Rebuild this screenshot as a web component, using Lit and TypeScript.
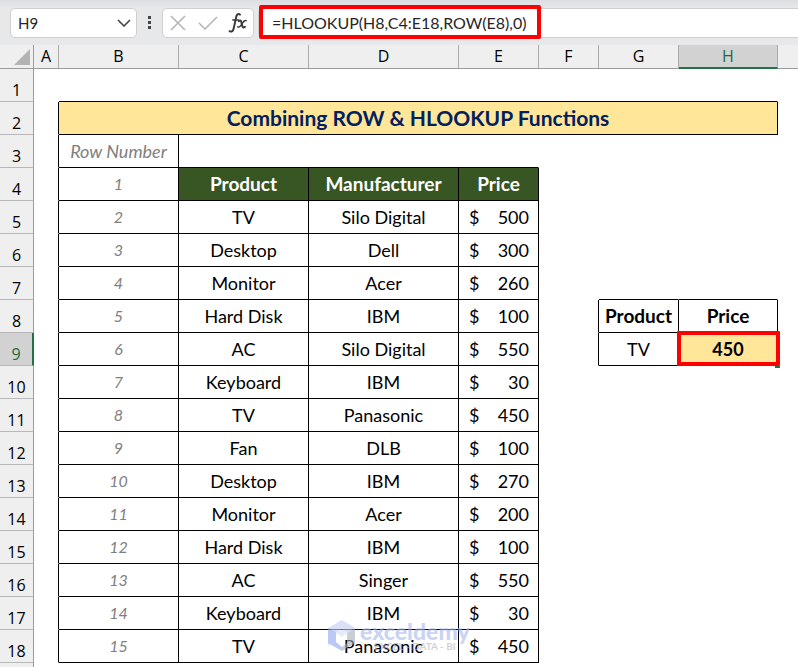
import { LitElement, html, css, svg, nothing } from "lit";
import { customElement, state } from "lit/decorators.js";
import { classMap } from "lit/directives/class-map.js";

const COLUMNS = ["A", "B", "C", "D", "E", "F", "G", "H"];

const PRODUCTS: [string, string, number][] = [
  ["TV", "Silo Digital", 500],
  ["Desktop", "Dell", 300],
  ["Monitor", "Acer", 260],
  ["Hard Disk", "IBM", 100],
  ["AC", "Silo Digital", 550],
  ["Keyboard", "IBM", 30],
  ["TV", "Panasonic", 450],
  ["Fan", "DLB", 100],
  ["Desktop", "IBM", 270],
  ["Monitor", "Acer", 200],
  ["Hard Disk", "IBM", 100],
  ["AC", "Singer", 550],
  ["Keyboard", "IBM", 30],
  ["TV", "Panasonic", 450],
];

const LAST_ROW = PRODUCTS.length + 4;

@customElement("formula-bar")
export class FormulaBar extends LitElement {
  static styles = css`
    :host {
      display: flex;
      align-items: center;
      gap: 4px;
      height: 45px;
      padding: 0 0 0 10px;
      box-sizing: border-box;
      background: linear-gradient(#dcdfe2, #e6e8ea 8px, #e6e8ea);
      font-family: Lato, sans-serif;
      color: #262626;
    }
    .box {
      display: flex;
      align-items: center;
      height: 30px;
      box-sizing: border-box;
      background: #fff;
      border: 1px solid #cfcfcf;
      border-radius: 5px;
    }
    .name {
      width: 127px;
      flex: none;
    }
    input {
      font: inherit;
      color: inherit;
      border: 0;
      outline: 0;
      background: none;
      min-width: 0;
      padding: 0;
      flex: 1;
    }
    .name input {
      font-size: 15px;
      padding-left: 7px;
    }
    button {
      border: 0;
      background: none;
      padding: 0;
      display: grid;
      place-items: center;
      width: 30px;
      height: 28px;
      flex: none;
    }
    .name button {
      width: 24px;
    }
    .dots {
      width: 17px;
      flex: none;
      display: grid;
      place-items: center;
    }
    .tools {
      width: 92px;
      flex: none;
    }
    svg {
      display: block;
    }
    .formula {
      position: relative;
      flex: 1;
      min-width: 0;
      border-right: 0;
      border-radius: 5px 0 0 5px;
    }
    .formula input {
      font-size: 16px;
      padding-left: 13px;
    }
    .mark {
      position: absolute;
      left: 0;
      top: -4px;
      width: 282px;
      height: 34px;
      box-sizing: border-box;
      border: 4px solid #f00;
      border-radius: 2px;
      pointer-events: none;
    }
  `;

  render() {
    return html`
      <div class="box name">
        <input aria-label="Name Box" value="H9" />
        <button aria-label="Open name list">
          <svg width="14" height="8" viewBox="0 0 14 8" fill="none" stroke="#444" stroke-width="1.6">
            <path d="M1 1l6 6 6-6" />
          </svg>
        </button>
      </div>
      <div class="dots">
        <svg width="4" height="14" viewBox="0 0 4 14" fill="#444">
          <rect width="3" height="3" /><rect y="5" width="3" height="3" /><rect y="10" width="3" height="3" />
        </svg>
      </div>
      <div class="box tools">
        <button aria-label="Cancel">
          <svg width="16" height="16" viewBox="0 0 16 16" fill="none" stroke="#b4b4b4" stroke-width="1.5">
            <path d="M1 1l14 14M15 1L1 15" />
          </svg>
        </button>
        <button aria-label="Enter">
          <svg width="20" height="14" viewBox="0 0 20 14" fill="none" stroke="#b4b4b4" stroke-width="1.5">
            <path d="M1 7l6 6L19 1" />
          </svg>
        </button>
        <button aria-label="Insert function">
          <svg width="20" height="22" viewBox="0 0 20 22" fill="none" stroke="#3a3a3a" stroke-linecap="round">
            <path stroke-width="2" d="M12 2.6C10.600 1.200 8.900 2 8.300 4.600L5.700 16.400C5.200 19 3.600 20.300 1.600 19.200" />
            <path stroke-width="1.500" d="M4.800 8h5.600" />
            <path stroke-width="2" d="M10.800 9.200c1.500-1.200 2.200-.6 2.600 1l.9 3.800c.4 1.600 1.300 1.900 2.700.8" />
            <path stroke-width="1.500" d="M18.200 8.600c-1.600-.8-2.600.4-4 2.900s-2.600 4.200-4.400 3.300" />
          </svg>
        </button>
      </div>
      <div class="box formula">
        <input aria-label="Formula Bar" value="=HLOOKUP(H8,C4:E18,ROW(E8),0)" />
        <span class="mark"></span>
      </div>
    `;
  }
}

@customElement("app-root")
export class AppRoot extends LitElement {
  @state() private activeRow = 9;
  @state() private activeColumn = "H";

  static styles = css`
    :host {
      display: flex;
      flex-direction: column;
      height: 100vh;
      overflow: hidden;
      background: #fff;
      color: #000;
      font-family: Lato, sans-serif;
    }
    formula-bar {
      flex: none;
    }
    .sheet {
      flex: 1;
      min-height: 0;
      overflow: hidden;
    }
    table {
      width: 100%;
      table-layout: fixed;
      border-collapse: separate;
      border-spacing: 0;
      font-size: 18px;
      line-height: 24px;
    }
    .w-head { width: 34px; }
    .w-a { width: 25px; }
    .w-b { width: 120px; }
    .w-c { width: 130px; }
    .w-d { width: 150px; }
    .w-e { width: 80px; }
    .w-f { width: 60px; }
    .w-g { width: 80px; }
    .w-h { width: 99px; }
    th,
    td {
      box-sizing: border-box;
      padding: 0;
      text-align: center;
      font-weight: 400;
      white-space: nowrap;
      border: 0 solid transparent;
      border-right-width: 1px;
      border-bottom-width: 1px;
    }
    tbody tr {
      height: 33px;
    }
    .col,
    .row,
    .corner {
      font-family: "Open Sans", sans-serif;
      font-size: 16px;
      background-color: #efefef;
      border-color: #9b9b9b;
    }
    .col,
    .corner {
      height: 24px;
      line-height: 23px;
    }
    .col {
      border-right-color: #ababab;
    }
    .col.last {
      border-right: 0;
    }
    .corner svg {
      display: block;
      margin-left: 14px;
    }
    .row {
      line-height: 22px;
      vertical-align: bottom;
      border-bottom-color: #b8b8b8;
    }
    .col.active,
    .row.active {
      background: #d2d2d2;
      color: #1e6b41;
    }
    .col.active {
      border-bottom: 2px solid #217346;
      line-height: 22px;
    }
    .row.active {
      border-right: 2px solid #217346;
    }
    .r { border-right-color: #000; }
    .b { border-bottom-color: #000; }
    .title {
      background: #ffe699;
      color: #002060;
      font-size: 21px;
      font-weight: 700;
    }
    .index {
      color: #808080;
      font-size: 16px;
      font-style: italic;
    }
    .index.label {
      font-size: 18px;
    }
    .head {
      background: #375623;
      color: #fff;
      font-size: 19px;
      font-weight: 700;
    }
    .strong {
      font-size: 19px;
      font-weight: 700;
    }
    .money {
      display: flex;
      justify-content: space-between;
      padding: 0 9px 0 10px;
    }
    .result {
      position: relative;
      background: #ffe699;
      font-weight: 700;
    }
    .outline {
      position: absolute;
      inset: -2px -3px -1px -2px;
      border: 4px solid #f00;
      border-radius: 1px;
    }
    .handle {
      position: absolute;
      right: -3px;
      bottom: -3px;
      width: 5px;
      height: 2px;
      background: #217346;
    }
    .maker {
      position: relative;
    }
    .brand {
      position: absolute;
      left: 19px;
      top: -11px;
      display: flex;
      align-items: center;
      gap: 4px;
      opacity: 0.6;
      pointer-events: none;
    }
    .words {
      display: flex;
      flex-direction: column;
      align-items: center;
      font-weight: 900;
      font-size: 23px;
      line-height: 22px;
      color: #a9b7ee;
    }
    .words small {
      font-size: 10px;
      font-weight: 700;
      line-height: 8px;
      color: #b4b4b8;
    }
  `;

  private logo() {
    return svg`
      <svg width="28" height="32" viewBox="0 0 28 32">
        <path fill="#c3cdf5" d="M0 9L14 1l13 8-8 5-5-4-6 4v10l-8 2z" />
        <path fill="#8fa6ee" d="M0 9l8 4v10l6 5v4L0 24z" />
        <path fill="#a8aebb" d="M27 9v15l-13 8v-4l5-4V14z" />
        <path fill="#d7def9" d="M8 14l6-4 5 4-5 4z" />
      </svg>`;
  }

  private rowHead(n: number) {
    return html`<th scope="row" class=${classMap({ row: true, active: n === this.activeRow })}>
      ${n <= LAST_ROW ? n : nothing}
    </th>`;
  }

  private productRow(n: number) {
    const [product, maker, price] = PRODUCTS[n - 5];
    return html`
      <td class="r b index">${n - 3}</td>
      <td class="r b">${product}</td>
      <td class="r b maker">
        ${maker}
        ${n === LAST_ROW
          ? html`<div class="brand">${this.logo()}<span class="words">exceldemy<small>EXCEL - DATA - BI</small></span></div>`
          : nothing}
      </td>
      <td class="r b"><div class="money"><span>$</span><span>${price}</span></div></td>
    `;
  }

  private lookup(n: number) {
    if (n === 7) return html`<td></td><td class="b"></td><td class="b"></td>`;
    if (n === 8) return html`<td class="r"></td><td class="r b strong">Product</td><td class="r b strong">Price</td>`;
    if (n === 9)
      return html`<td class="r"></td><td class="r b">TV</td>
        <td class="r b result">450<span class="outline"></span><span class="handle"></span></td>`;
    return html`<td></td><td></td><td></td>`;
  }

  private cells(n: number) {
    if (n === 1) return html`<td></td><td class="b" colspan="7"></td>`;
    if (n === 2) return html`<td class="r"></td><td class="r b title" colspan="7">Combining ROW &amp; HLOOKUP Functions</td>`;
    if (n === 3)
      return html`<td class="r"></td><td class="r b index label">Row Number</td><td class="b" colspan="3"></td><td colspan="3"></td>`;
    if (n === 4)
      return html`<td class="r"></td><td class="r b index">1</td><td class="r b head">Product</td>
        <td class="r b head">Manufacturer</td><td class="r b head">Price</td>${this.lookup(n)}`;
    if (n <= LAST_ROW) return html`<td class="r"></td>${this.productRow(n)}${this.lookup(n)}`;
    return html`<td colspan="8"></td>`;
  }

  render() {
    return html`
      <formula-bar></formula-bar>
      <div class="sheet">
        <table>
          <colgroup>
            <col class="w-head" /><col class="w-a" /><col class="w-b" /><col class="w-c" /><col class="w-d" />
            <col class="w-e" /><col class="w-f" /><col class="w-g" /><col class="w-h" /><col />
          </colgroup>
          <thead>
            <tr>
              <td class="corner">
                <svg width="16" height="16" viewBox="0 0 16 16"><path fill="#b3b3b3" d="M16 0v16H0z" /></svg>
              </td>
              ${COLUMNS.map(
                (c) => html`<th scope="col" class=${classMap({ col: true, active: c === this.activeColumn })}>${c}</th>`
              )}
              <td class="col last"></td>
            </tr>
          </thead>
          <tbody>
            ${Array.from({ length: LAST_ROW + 1 }, (_, i) => html`<tr>${this.rowHead(i + 1)}${this.cells(i + 1)}<td></td></tr>`)}
          </tbody>
        </table>
      </div>
    `;
  }
}
